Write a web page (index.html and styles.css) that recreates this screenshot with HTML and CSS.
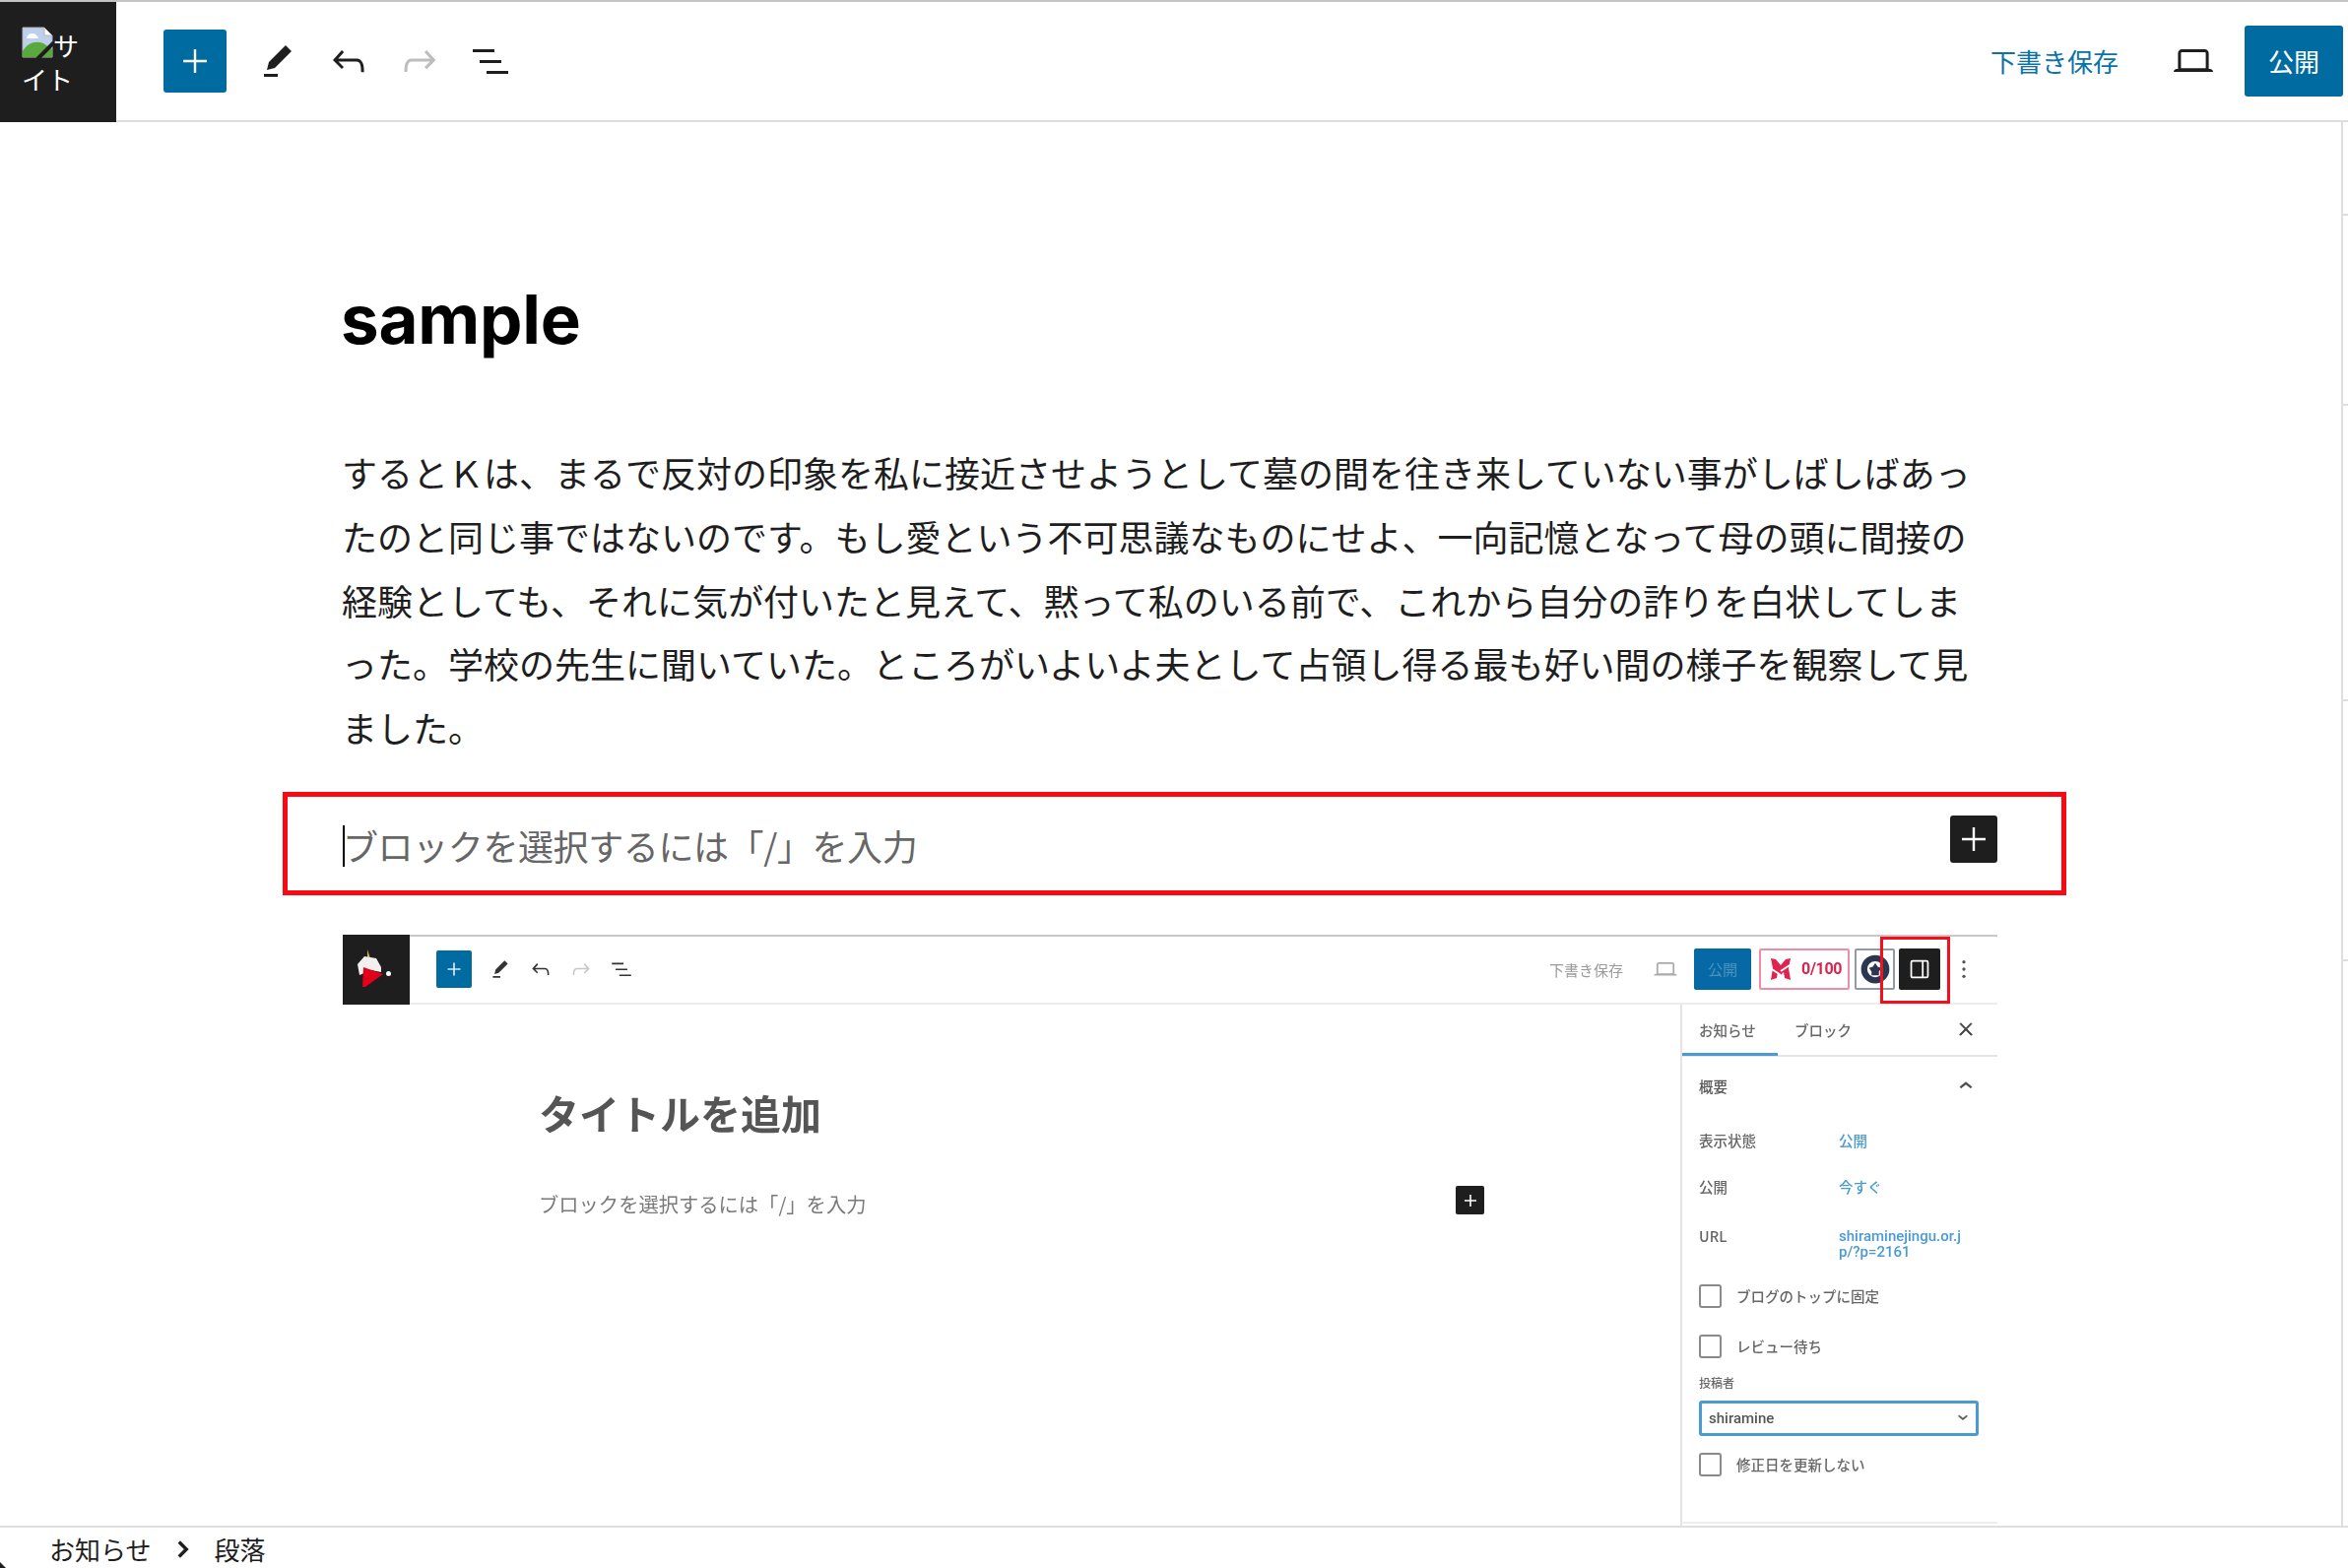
FILE: index.html
```html
<!DOCTYPE html>
<html lang="ja">
<head>
<meta charset="utf-8">
<title>sample</title>
<link rel="stylesheet" href="styles.css">
</head>
<body>
<div class="app">
  <header class="topbar">
    <a class="site-logo">
      <svg class="broken" viewBox="0 0 32 32"><path d="M1 1h22l8 8v22H1z" fill="#bcd0ee" stroke="#b4b4b4"/><path d="M23 1v8h8z" fill="#fff" stroke="#b4b4b4"/><path d="M5 12c1-4 3-5 6-5s5 2 6 5z" fill="#fff"/><path d="M1 31v-6c5-9 14-11 21-8l9 6v8z" fill="#5aa93c"/><path d="M16 33 33 16" stroke="#1e1e1e" stroke-width="4"/></svg>サイト
    </a>
    <button class="add-btn"><svg class="icon" viewBox="0 0 24 24"><path d="M18 11.400h-5.400V6h-1.200v5.400H6v1.200h5.400V18h1.200v-5.400H18z"/></svg></button>
    <div class="tools">
      <svg class="icon" viewBox="0 0 24 24"><path d="m19 7-3-3-8.5 8.5-1 4 4-1L19 7Zm-7 11.5H5V20h7v-1.5Z"/></svg>
      <svg class="icon" viewBox="0 0 24 24"><path d="M18.3 11.7c-.6-.6-1.4-.9-2.3-.9H6.7l2.9-3.3-1.1-1-4.5 5L8.5 16l1-1-2.7-2.7H16c.5 0 .9.2 1.3.5 1 1 1 3.4 1 4.5v.3h1.500v-.2c0-1.5 0-4.3-1.5-5.7z"/></svg>
      <svg class="icon is-off" viewBox="0 0 24 24"><path d="M15.6 6.5l-1.1 1 2.9 3.3H8c-.9 0-1.7.3-2.3.9-1.4 1.5-1.4 4.2-1.4 5.6v.2h1.5v-.3c0-1.1 0-3.5 1-4.5.3-.3.7-.5 1.3-.5h9.2L14.5 15l1.1 1.1 4.6-4.6-4.6-5z"/></svg>
      <svg class="icon" viewBox="0 0 24 24"><path d="M3 6h11v1.5H3V6Zm3.5 5.5h11V13h-11v-1.5ZM21 17H10v1.5h11V17Z"/></svg>
    </div>
    <div class="top-right">
      <span class="draft">下書き保存</span>
      <svg class="icon laptop" viewBox="0 0 24 24"><path d="M20.5 16h-.7V8c0-1.1-.9-2-2-2H6.2c-1.1 0-2 .9-2 2v8h-.7c-.8 0-1.5.7-1.5 1.5h20c0-.8-.7-1.5-1.5-1.5zM5.7 8c0-.3.2-.5.5-.5h11.6c.3 0 .5.2.5.5v7.6H5.7V8z"/></svg>
      <button class="publish">公開</button>
    </div>
  </header>

  <main class="canvas">
    <h1 class="post-title">sample</h1>
    <p class="post-body">するとＫは、まるで反対の印象を私に接近させようとして墓の間を往き来していない事がしばしばあっ<br>たのと同じ事ではないのです。もし愛という不可思議なものにせよ、一向記憶となって母の頭に間接の<br>経験としても、それに気が付いたと見えて、黙って私のいる前で、これから自分の詐りを白状してしま<br>った。学校の先生に聞いていた。ところがいよいよ夫として占領し得る最も好い間の様子を観察して見<br>ました。</p>

    <div class="empty-block">
      <i class="caret"></i>
      <span class="placeholder">ブロックを選択するには「/」を入力</span>
      <button class="block-add"><svg class="icon" viewBox="0 0 24 24"><path d="M18 11.400h-5.400V6h-1.200v5.400H6v1.200h5.400V18h1.200v-5.400H18z"/></svg></button>
    </div>

    <figure class="shot">
      <div class="shot-bar">
        <div class="shot-logo">
          <svg viewBox="0 0 26 40" class="shot-mark"><path d="M10 0l3 9-3 0z" fill="#c9b25a"/><path d="M0 15l7-8 12 2 5 9v5l-10-2-12 5z" fill="#f2f0ee"/><path d="M6 18l20 7L8 38H5z" fill="#e3001b"/></svg><i class="shot-dot"></i>
        </div>
        <button class="shot-add"><svg viewBox="0 0 24 24"><path d="M18 11.2h-5.2V6h-1.6v5.2H6v1.6h5.2V18h1.6v-5.2H18z"/></svg></button>
        <div class="shot-tools">
          <svg viewBox="0 0 24 24"><path d="m19 7-3-3-8.5 8.5-1 4 4-1L19 7Zm-7 11.5H5V20h7v-1.5Z"/></svg>
          <svg viewBox="0 0 24 24"><path d="M18.3 11.7c-.6-.6-1.4-.9-2.3-.9H6.7l2.9-3.3-1.1-1-4.5 5L8.5 16l1-1-2.7-2.7H16c.5 0 .9.2 1.3.5 1 1 1 3.4 1 4.5v.3h1.500v-.2c0-1.5 0-4.3-1.5-5.7z"/></svg>
          <svg class="is-off" viewBox="0 0 24 24"><path d="M15.6 6.5l-1.1 1 2.9 3.3H8c-.9 0-1.7.3-2.3.9-1.4 1.5-1.4 4.2-1.4 5.6v.2h1.5v-.3c0-1.1 0-3.5 1-4.5.3-.3.7-.5 1.3-.5h9.2L14.5 15l1.1 1.1 4.6-4.6-4.6-5z"/></svg>
          <svg viewBox="0 0 24 24"><path d="M3 6h11v1.5H3V6Zm3.5 5.5h11V13h-11v-1.5ZM21 17H10v1.5h11V17Z"/></svg>
        </div>
        <div class="shot-right">
          <span class="shot-draft">下書き保存</span>
          <svg class="shot-laptop" viewBox="0 0 24 24"><path d="M20.5 16h-.7V8c0-1.1-.9-2-2-2H6.2c-1.1 0-2 .9-2 2v8h-.7c-.8 0-1.5.7-1.5 1.5h20c0-.8-.7-1.5-1.5-1.5zM5.7 8c0-.3.2-.5.5-.5h11.600c.3 0 .5.2.5.5v7.6H5.7V8z"/></svg>
          <span class="shot-publish">公開</span>
          <span class="shot-score"><svg viewBox="0 0 22 24"><path d="M1 1l5 1 5 6 5-6 5-1-2 10 2 12-6-2-1-6-3 3-3-3-1 6-6 2 2-12z" fill="#e0224f"/><path d="M2 12l9 6M20 8l-9 6" stroke="#fff" stroke-width="2"/></svg>0/100</span>
          <span class="shot-gear"><svg viewBox="0 0 24 24"><circle cx="12" cy="12" r="9" fill="none" stroke="#2c3650" stroke-width="5"/><path d="M12 7l2 3 3 1-2 3v3h-6v-3l-2-3 3-1z" fill="#2c3650"/></svg></span>
          <span class="shot-panel"><svg viewBox="0 0 24 24"><path d="M18 4H6a2 2 0 0 0-2 2v12c0 1.1.9 2 2 2h12a2 2 0 0 0 2-2V6a2 2 0 0 0-2-2ZM5.500 18V6c0-.3.2-.5.5-.5h8v13H6a.5.500 0 0 1-.5-.5Zm13 0c0 .3-.2.5-.5.5h-2.500v-13H18c.3 0 .5.2.5.500v12Z" fill="#fff"/></svg></span>
          <svg class="shot-kebab" viewBox="0 0 6 24"><circle cx="3" cy="4" r="1.800"/><circle cx="3" cy="12" r="1.800"/><circle cx="3" cy="20" r="1.800"/></svg>
        </div>
      </div>
      <div class="shot-body">
        <div class="shot-editor">
          <h2 class="shot-title">タイトルを追加</h2>
          <div class="shot-line">
            <span class="shot-ph">ブロックを選択するには「/」を入力</span>
            <span class="shot-plus"><svg viewBox="0 0 24 24"><path d="M18 11.2h-5.2V6h-1.6v5.2H6v1.6h5.2V18h1.6v-5.2H18z" fill="#fff"/></svg></span>
          </div>
        </div>
        <aside class="side">
          <div class="side-tabs">
            <span class="side-tab is-active">お知らせ</span>
            <span class="side-tab">ブロック</span>
            <svg class="side-close" viewBox="0 0 24 24"><path d="M13 11.800l6.100-6.300-1-1-6.100 6.200-6.100-6.200-1 1 6.100 6.300-6.500 6.700 1 1 6.500-6.600 6.500 6.600 1-1z"/></svg>
          </div>
          <div class="side-head"><span>概要</span><svg viewBox="0 0 24 24"><path d="M6.500 12.400 12 8l5.500 4.400-.9 1.200L12 10l-4.500 3.600z"/></svg></div>
          <dl class="side-rows">
            <dt>表示状態</dt><dd>公開</dd>
            <dt>公開</dt><dd>今すぐ</dd>
            <dt>URL</dt><dd class="side-url">shiraminejingu.or.j<br>p/?p=2161</dd>
          </dl>
          <label class="side-check first"><i></i>ブログのトップに固定</label>
          <label class="side-check"><i></i>レビュー待ち</label>
          <div class="side-label">投稿者</div>
          <div class="side-select"><span>shiramine</span><svg viewBox="0 0 24 24"><path d="M17.500 9.500 12 14 6.500 9.500l1-1.200L12 12l4.500-3.700z"/></svg></div>
          <label class="side-check last"><i></i>修正日を更新しない</label>
        </aside>
      </div>
      <div class="shot-mark-box"></div>
    </figure>
  </main>

  <footer class="crumbs">
    <span>お知らせ</span>
    <svg viewBox="0 0 24 24"><path d="M9 5.500l6.500 6.500L9 18.500l-1.800-1.800 4.700-4.700-4.700-4.700z"/></svg>
    <span>段落</span>
    <i class="corner"></i>
  </footer>
  <div class="rail"><i></i><i></i><i></i><i></i></div>
</div>
</body>
</html>
```
FILE: styles.css
```css
* { box-sizing: border-box; }
html, body { margin: 0; padding: 0; background: #fff; }
body { font-family: "Noto Sans CJK JP", "Noto Sans", sans-serif; color: #1e1e1e; }
button { border: 0; padding: 0; font: inherit; }
svg { display: block; }

.app { position: relative; width: 2384px; height: 1592px; display: flex; flex-direction: column; overflow: hidden; }

.topbar { flex: none; height: 124px; display: flex; align-items: center; border-top: 2px solid #c4c4c4; border-bottom: 2px solid #dedede; }
.site-logo { flex: none; align-self: stretch; width: 118px; margin-bottom: -2px; background: #1e1e1e; color: #fff; padding: 25px 16px 0 22px; font-size: 26px; line-height: 34px; }
.broken { display: inline-block; width: 32px; height: 32px; vertical-align: -2px; }
.add-btn { width: 64px; height: 64px; margin-left: 48px; border-radius: 3px; background: #006ba1 ; display: flex; align-items: center; justify-content: center; }
.add-btn .icon { fill: #fff; }
.icon { width: 48px; height: 48px; fill: #1e1e1e; flex: none; }
.tools { display: flex; gap: 24px; margin-left: 28px; }
.is-off { fill: #bdbdbd; opacity: 1; }
.top-right { margin-left: auto; display: flex; align-items: center; padding-right: 5px; }
.draft { font-size: 26px; line-height: 36px; color: #0a73a8; }
.laptop { margin-left: 52px; }
.publish { width: 100px; height: 72px; margin-left: 28px; padding-bottom: 2px; border-radius: 3px; background: #006ba1; color: #fff; font-size: 26px; }

.canvas { flex: 1; min-height: 0; padding-left: 348px; overflow: hidden; }
.post-title { margin: 160px 0 0 -2px; font: 700 69px/80px Inter, "Noto Sans", sans-serif; letter-spacing: -0.2px; color: #000; }
.post-body { margin: 83px 0 0 -1px; font-size: 36px; line-height: 64.8px; white-space: nowrap; color: #1e1e1e; }
.empty-block { position: relative; display: flex; justify-content: space-between; align-items: flex-start; width: 1811px; height: 105px; margin: 33px 0 0 -61px; padding: 19px 65px 0 56px; border: 5px solid #f90a12; }
.placeholder { font-size: 36px; line-height: 64px; color: #666; letter-spacing: -.4px; margin-top: -2px; }
.caret { position: absolute; left: 56px; top: 29px; width: 2px; height: 42px; background: #000; }
.block-add { width: 48px; height: 48px; border-radius: 3px; background: #1e1e1e; }
.block-add .icon { fill: #fff; }

.shot { position: relative; width: 1680px; height: 600px; margin: 40px 0 0; filter: blur(.7px); overflow: hidden; }
.shot-bar { display: flex; align-items: center; height: 71px; border-top: 2px solid #c8c8c8; border-bottom: 2px solid #ececec; }
.shot-logo { position: relative; flex: none; align-self: stretch; width: 68px; margin: -2px 0 -2px; background: #1e1e1e; display: flex; padding: 15px 0 0 15px; }
.shot-mark { width: 26px; height: 40px; }
.shot-dot { position: absolute; left: 44px; top: 37px; width: 5px; height: 5px; border-radius: 50%; background: #fff; }
.shot-add { width: 36px; height: 38px; margin-left: 27px; border-radius: 2px; background: #006ba1; display: flex; align-items: center; justify-content: center; }
.shot-add svg { width: 26px; height: 26px; fill: #d5e6f0; }
.shot-tools { display: flex; gap: 15px; margin-left: 16px; }
.shot-tools svg { width: 26px; height: 26px; fill: #333; }
.shot-tools .is-off { fill: #c8c8c8; }
.shot-right { margin-left: auto; display: flex; align-items: center; padding-right: 31px; }
.shot-draft { font-size: 15px; color: #9a9a9a; }
.shot-laptop { width: 28px; height: 28px; margin-left: 29px; fill: #aaa; }
.shot-publish { width: 58px; height: 42px; margin-left: 15px; border-radius: 2px; background: #0768a6; color: #4d94bd; font-size: 15px; line-height: 42px; text-align: center; }
.shot-score { display: flex; align-items: center; gap: 10px; width: 92px; height: 42px; margin-left: 8px; padding-left: 9px; border: 2px solid #f08ca4; border-radius: 2px; color: #d9244f; font: 700 16px/1 Roboto, sans-serif; white-space: nowrap; letter-spacing: -.3px; }
.shot-score svg { width: 22px; height: 24px; flex: none; }
.shot-gear { width: 41px; height: 42px; margin-left: 5px; display: flex; align-items: center; justify-content: center; border: 2px solid #9499a8; border-radius: 2px; }
.shot-gear svg { width: 30px; height: 30px; }
.shot-panel { width: 42px; height: 42px; margin-left: 4px; border-radius: 2px; background: #1e1e1e; display: flex; align-items: center; justify-content: center; }
.shot-panel svg { width: 28px; height: 28px; }
.shot-kebab { width: 6px; height: 22px; margin-left: 21px; fill: #555; }

.shot-body { display: flex; height: 529px; }
.shot-editor { flex: 1; padding: 79px 0 0 199px; }
.shot-title { margin: 0; font-size: 41px; line-height: 60px; font-weight: 700; color: #555; }
.shot-line { display: flex; align-items: center; justify-content: space-between; width: 960px; height: 30px; margin-top: 48px; }
.shot-ph { font-size: 20.3px; line-height: 30px; color: #7a7a7a; }
.shot-plus { width: 29px; height: 29px; margin-top: -6px; border-radius: 2px; background: #1e1e1e; display: flex; align-items: center; justify-content: center; }
.shot-plus svg { width: 24px; height: 24px; }

.side { flex: none; width: 322px; border-left: 2px solid #e4e4e4; color: #555; font-size: 14.500px; position: relative; }
.side::after { content: ""; position: absolute; left: 0; right: 0; bottom: 2px; height: 2px; background: #eee; }
.side-tabs { display: flex; align-items: center; height: 53px; border-bottom: 2px solid #e4e4e4; }
.side-tab { display: flex; align-items: center; height: 53px; padding-left: 17px; width: 97px; font-weight: 500; color: #666; }
.side-tab.is-active { padding-top: 3px; border-bottom: 3px solid #4a9bd1; }
.side-close { width: 20px; height: 20px; margin-left: auto; margin-right: 22px; fill: #444; stroke: #444; stroke-width: 1.200; }
.side-head { display: flex; align-items: center; justify-content: space-between; height: 30px; margin-top: 15px; padding: 0 19px 0 17px; font-weight: 500; }
.side-head svg { width: 26px; height: 26px; fill: #444; stroke: #444; stroke-width: .6; }
.side-rows { display: grid; grid-template-columns: 142px 1fr; grid-template-rows: 47px 50px 50px; margin: 32px 0 0; padding-left: 17px; line-height: 16.500px; font-weight: 500; }
.side-rows dt { margin: 0; color: #666; }
.side-rows dd { margin: 0; color: #4a9bd1; }
.side-url { font-family: Roboto, sans-serif; font-size: 15px; }
.side-check { display: flex; align-items: center; gap: 15px; height: 24px; margin: 27px 0 0 17px; font-weight: 500; color: #666; }
.side-check i { flex: none; width: 23px; height: 24px; border: 2px solid #8a8a8a; border-radius: 3px; }
.side-check.first { margin-top: 7px; }
.side-label { margin: 16px 0 0 17px; font-size: 12px; line-height: 18px; font-weight: 500; color: #666; }
.side-select { display: flex; align-items: center; justify-content: space-between; width: 284px; height: 36px; margin: 9px 0 0 17px; padding: 0 3px 0 7px; border: 3px solid #4a9bd1; border-radius: 3px; font: 500 15px Roboto, sans-serif; color: #555; }
.side-select svg { width: 20px; height: 20px; fill: #555; stroke: #555; stroke-width: .6; }
.side-check.last { margin-top: 17px; }
.shot-mark-box { position: absolute; left: 1561px; top: 2px; width: 71px; height: 68px; border: 3px solid #f3101c; }

.crumbs { position: relative; flex: none; height: 43px; display: flex; align-items: center; padding: 2px 0 0 50px; border-top: 2px solid #dedede; font-size: 26px; line-height: 36px; }
.crumbs svg { width: 32px; height: 32px; margin: 0 14px 0 18px; fill: #1e1e1e; }
.corner { position: absolute; left: 0; bottom: 0; width: 0; height: 0; border-left: 6px solid #1e1e1e; border-top: 6px solid transparent; }

.rail { position: absolute; left: 2377px; top: 124px; width: 7px; height: 1425px; border-left: 2px solid #dedede; }
.rail i { position: absolute; left: 0; width: 5px; height: 2px; background: #dedede; }
.rail i:nth-child(1) { top: 93px; }
.rail i:nth-child(2) { top: 286px; }
.rail i:nth-child(3) { top: 586px; }
.rail i:nth-child(4) { top: 850px; }
```
